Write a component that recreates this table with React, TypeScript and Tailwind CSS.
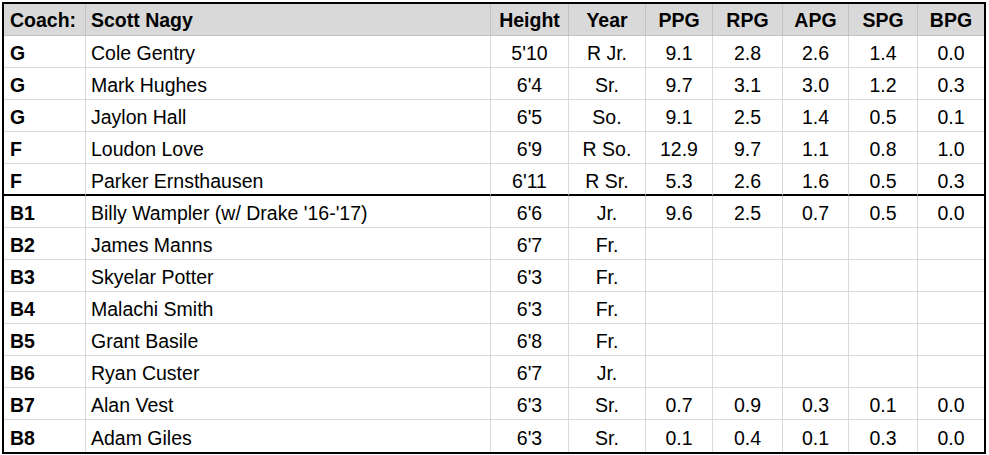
const players = [
  { pos: 'G', name: 'Cole Gentry', height: "5'10", year: 'R Jr.', stats: ['9.1', '2.8', '2.6', '1.4', '0.0'] },
  { pos: 'G', name: 'Mark Hughes', height: "6'4", year: 'Sr.', stats: ['9.7', '3.1', '3.0', '1.2', '0.3'] },
  { pos: 'G', name: 'Jaylon Hall', height: "6'5", year: 'So.', stats: ['9.1', '2.5', '1.4', '0.5', '0.1'] },
  { pos: 'F', name: 'Loudon Love', height: "6'9", year: 'R So.', stats: ['12.9', '9.7', '1.1', '0.8', '1.0'] },
  { pos: 'F', name: 'Parker Ernsthausen', height: "6'11", year: 'R Sr.', stats: ['5.3', '2.6', '1.6', '0.5', '0.3'] },
  { pos: 'B1', name: "Billy Wampler (w/ Drake '16-'17)", height: "6'6", year: 'Jr.', stats: ['9.6', '2.5', '0.7', '0.5', '0.0'] },
  { pos: 'B2', name: 'James Manns', height: "6'7", year: 'Fr.', stats: ['', '', '', '', ''] },
  { pos: 'B3', name: 'Skyelar Potter', height: "6'3", year: 'Fr.', stats: ['', '', '', '', ''] },
  { pos: 'B4', name: 'Malachi Smith', height: "6'3", year: 'Fr.', stats: ['', '', '', '', ''] },
  { pos: 'B5', name: 'Grant Basile', height: "6'8", year: 'Fr.', stats: ['', '', '', '', ''] },
  { pos: 'B6', name: 'Ryan Custer', height: "6'7", year: 'Jr.', stats: ['', '', '', '', ''] },
  { pos: 'B7', name: 'Alan Vest', height: "6'3", year: 'Sr.', stats: ['0.7', '0.9', '0.3', '0.1', '0.0'] },
  { pos: 'B8', name: 'Adam Giles', height: "6'3", year: 'Sr.', stats: ['0.1', '0.4', '0.1', '0.3', '0.0'] },
]

const widths = ['w-[82px]', 'w-[405px]', 'w-[78px]', 'w-[77px]', 'w-[67px]', 'w-[70px]', 'w-[66px]', 'w-[69px]', 'w-[66px]']
const statHeads = ['PPG', 'RPG', 'APG', 'SPG', 'BPG']

export default function App() {
  return (
    <div className="min-h-screen bg-white pl-[2px] pt-[2px] font-['Liberation_Sans',Arial,sans-serif] text-[19.5px] leading-[24px] text-black">
      <table className="table-fixed border-separate border-spacing-0 border-2 border-black">
        <thead>
          <tr className="bg-[#d9d9d9] font-bold">
            <th className={`${widths[0]} h-[32px] border-r border-b border-[#c2c2c2] pl-[6px] pb-[3px] text-left align-bottom`}>Coach:</th>
            <th className={`${widths[1]} h-[32px] border-r border-b border-[#c2c2c2] pl-[5px] pb-[3px] text-left align-bottom`}>Scott Nagy</th>
            <th className={`${widths[2]} h-[32px] border-r border-b border-[#c2c2c2] pb-[3px] text-center align-bottom`}>Height</th>
            <th className={`${widths[3]} h-[32px] border-r border-b border-[#c2c2c2] pb-[3px] text-center align-bottom`}>Year</th>
            {statHeads.map((h, i) => (
              <th
                key={h}
                className={`${widths[i + 4]} h-[32px] border-b border-[#c2c2c2] pb-[3px] text-center align-bottom ${i < 4 ? 'border-r' : ''}`}
              >
                {h}
              </th>
            ))}
          </tr>
        </thead>
        <tbody>
          {players.map((p, r) => {
            const last = r === players.length - 1
            const thick = r === 4
            const rowBorder = last
              ? 'pb-[2px]'
              : thick
                ? 'border-b-2 border-b-black pb-[1px]'
                : 'border-b border-b-[#d9d9d9] pb-[2px]'
            return (
              <tr key={p.pos}>
                <td className={`h-[32px] border-r border-r-[#d9d9d9] ${rowBorder} pl-[6px] font-bold align-bottom`}>{p.pos}</td>
                <td className={`h-[32px] border-r border-r-[#d9d9d9] ${rowBorder} pl-[5px] align-bottom whitespace-nowrap`}>{p.name}</td>
                <td className={`h-[32px] border-r border-r-[#d9d9d9] ${rowBorder} text-center align-bottom`}>{p.height}</td>
                <td className={`h-[32px] border-r border-r-[#d9d9d9] ${rowBorder} text-center align-bottom`}>{p.year}</td>
                {p.stats.map((s, i) => (
                  <td
                    key={i}
                    className={`h-[32px] ${i < 4 ? 'border-r border-r-[#d9d9d9]' : ''} ${rowBorder} text-center align-bottom`}
                  >
                    {s}
                  </td>
                ))}
              </tr>
            )
          })}
        </tbody>
      </table>
    </div>
  )
}
